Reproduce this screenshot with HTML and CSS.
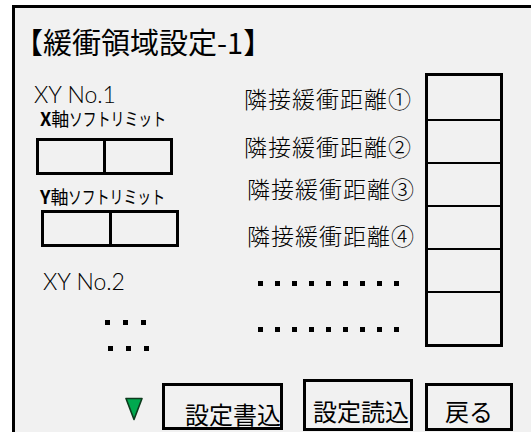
FILE: index.html
```html
<!DOCTYPE html>
<html lang="ja">
  <head>
    <meta charset="UTF-8" />
    <meta name="viewport" content="width=device-width, initial-scale=1.0" />
    <title>緩衝領域設定</title>
    <link rel="stylesheet" href="styles.css">
  </head>
  <body>
    <div class="panel">
      <h1 class="title">【緩衝領域設定-1】</h1>

      <div class="main">
        <div class="axes">
          <div class="xy xy-1">XY No.1</div>
          <div class="axis axis-x"><b>X</b>軸<span class="kana">ソフトリミット</span></div>
          <div class="pair pair-x"><div class="cell"></div><div class="cell"></div></div>
          <div class="axis axis-y"><b>Y</b>軸<span class="kana">ソフトリミット</span></div>
          <div class="pair pair-y"><div class="cell"></div><div class="cell"></div></div>
          <div class="xy xy-2">XY No.2</div>
          <div class="dotrow vrow-1"><i></i><i></i><i></i></div>
          <div class="dotrow vrow-2"><i></i><i></i><i></i></div>
        </div>

        <div class="labels">
          <div class="label l1">隣接緩衝距離①</div>
          <div class="label l2">隣接緩衝距離②</div>
          <div class="label l3">隣接緩衝距離③</div>
          <div class="label l4">隣接緩衝距離④</div>
          <div class="dotrow hrow-1"><i></i><i></i><i></i><i></i><i></i><i></i><i></i><i></i><i></i></div>
          <div class="dotrow hrow-2"><i></i><i></i><i></i><i></i><i></i><i></i><i></i><i></i><i></i></div>
        </div>

        <div class="boxes">
          <div class="box"></div>
          <div class="box"></div>
          <div class="box"></div>
          <div class="box"></div>
          <div class="box"></div>
          <div class="box"></div>
        </div>
      </div>

      <div class="footer">
        <svg class="mark" viewBox="0 0 18 24" width="18" height="24">
          <polygon points="1,1.5 17,1.5 9,22.5" fill="#00a94f" stroke="#0d3b1d" stroke-width="1.6" stroke-linejoin="round" />
        </svg>
        <button class="btn btn-write">設定書込</button>
        <button class="btn btn-read">設定読込</button>
        <button class="btn btn-back">戻る</button>
      </div>
    </div>
  </body>
</html>
```

FILE: styles.css
```css
* {
  margin: 0;
  padding: 0;
  box-sizing: border-box;
}

body {
  font-family: "Noto Sans CJK JP", "Noto Sans", sans-serif;
  color: #000;
  background: #fff;
  overflow: hidden;
}

.panel {
  display: flex;
  flex-direction: column;
  height: calc(100vh - 5px);
  margin: 5px 0 0 12px;
  border-left: 3px solid #000;
  border-top: 3px solid #000;
  background: #f1f1f1;
}

.title {
  margin: 19px 0 0 -1px;
  font-size: 29px;
  line-height: 29px;
  font-weight: 400;
  white-space: nowrap;
}

.main {
  display: flex;
  margin-top: 17px;
}

/* left column: XY groups */
.axes {
  width: 215px;
  padding-left: 19px;
}

.xy {
  font-family: Lato, "Noto Sans", sans-serif;
  font-size: 23px;
  line-height: 24px;
  font-weight: 300;
}

.xy-1 {
  margin-top: 9px;
}

.xy-2 {
  margin: 22px 0 0 9px;
}

.axis {
  margin-left: 6px;
  font-size: 18px;
  line-height: 18px;
  white-space: nowrap;
}

.axis-x {
  margin-top: 3px;
}

.axis-y {
  margin-top: 12px;
}

.kana {
  display: inline-block;
  transform: scaleX(0.77);
  transform-origin: left center;
}

.pair {
  display: flex;
  width: 137px;
  height: 37px;
  border: 3px solid #000;
}

.pair-x {
  margin: 11px 0 0 2px;
}

.pair-y {
  width: 138px;
  margin: 5px 0 0 7px;
}

.cell {
  flex: 1;
}

.cell + .cell {
  border-left: 3px solid #000;
}

.dotrow {
  display: flex;
  gap: 13px;
}

.dotrow i {
  width: 5px;
  height: 5px;
  background: #000;
}

.vrow-1 {
  margin: 27px 0 0 71px;
}

.vrow-2 {
  margin: 21px 0 0 74px;
}

/* middle column: distance labels */
.labels {
  width: 195px;
  padding-left: 14px;
}

.label {
  font-family: "Noto Sans CJK JP Light", "Noto Sans CJK JP", sans-serif;
  font-size: 23px;
  line-height: 23px;
  font-weight: 300;
  letter-spacing: 1px;
  white-space: nowrap;
}

.l1 {
  margin-top: 14px;
}

.l2 {
  margin-top: 25px;
}

.l3 {
  margin: 19px 0 0 3px;
}

.l4 {
  margin: 24px 0 0 3px;
}

.hrow-1,
.hrow-2 {
  gap: 12px;
  margin-left: 14px;
}

.hrow-1 {
  margin-top: 34px;
}

.hrow-2 {
  margin-top: 41px;
}

/* right column: input boxes */
.boxes {
  width: 78px;
  height: 274px;
  border: 3px solid #000;
}

.box {
  height: 43px;
}

.box + .box {
  border-top: 2px solid #000;
}

/* bottom buttons */
.footer {
  display: flex;
  align-items: flex-end;
  margin-top: auto;
  padding: 0 0 1px 110px;
}

.mark {
  display: block;
  margin-bottom: 10px;
}

.btn {
  display: block;
  border: 3px solid #000;
  background: transparent;
  color: #000;
  font-family: inherit;
  font-size: 24px;
  line-height: 24px;
  text-align: left;
  white-space: nowrap;
  overflow: visible;
}

.btn-write {
  width: 121px;
  height: 47px;
  margin: 0 0 1px 19px;
  padding: 15px 0 0 20px;
}

.btn-read {
  width: 110px;
  height: 52px;
  margin-left: 20px;
  padding: 12px 0 0 7px;
}

.btn-back {
  width: 88px;
  height: 48px;
  margin-left: 12px;
  padding-top: 8px;
  text-align: center;
}
```
